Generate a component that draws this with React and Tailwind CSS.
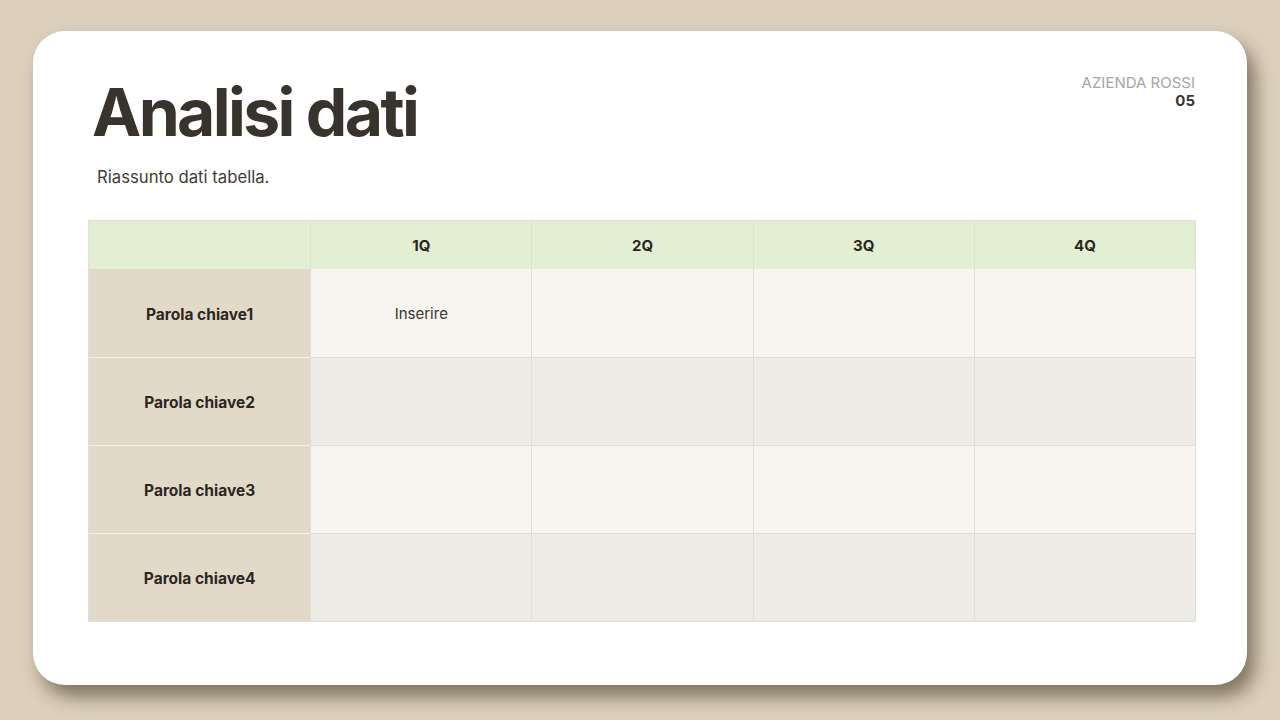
const quarters = ['1Q', '2Q', '3Q', '4Q'];
const rows = [
    { label: 'Parola chiave1', cells: ['Inserire', '', '', ''] },
    { label: 'Parola chiave2', cells: ['', '', '', ''] },
    { label: 'Parola chiave3', cells: ['', '', '', ''] },
    { label: 'Parola chiave4', cells: ['', '', '', ''] },
];

const App = () => {
    return (
        <div
            className="w-[1280px] h-[720px] bg-[#dcd0bc] pt-[31px] pl-[33px] overflow-hidden"
            style={{ fontFamily: 'Inter, "Noto Sans", sans-serif' }}
        >
            <div className="w-[1214px] h-[654px] bg-white rounded-[32px] shadow-[8px_12px_18px_rgba(70,58,35,0.6)] pt-[42px] px-[51px]">
                <div className="flex justify-between items-start">
                    <div>
                        <h1 className="mt-[6px] pl-[8px] text-[66px] leading-none font-bold tracking-[-0.04em] text-[#38332c]">
                            Analisi dati
                        </h1>
                        <p className="mt-[20px] pl-[13px] text-[16.7px] leading-6 text-[#3f3b36]">
                            Riassunto dati tabella.
                        </p>
                    </div>
                    <div className="text-right text-[15px] leading-[18px] pt-[1px] pr-[1px]">
                        <div className="text-[#a9a59f]">AZIENDA ROSSI</div>
                        <div className="font-bold text-[#3a352e]">05</div>
                    </div>
                </div>

                <div className="mt-[31px] ml-[4px] w-[1108px] border border-[#e2dfd8] grid grid-cols-5">
                    <div className="h-[48px] bg-[#e3efd3]" />
                    {quarters.map((q) => (
                        <div
                            key={q}
                            className="h-[48px] pt-[2px] bg-[#e3efd3] border-l border-[#d9e4cb] flex items-center justify-center text-[15px] font-bold text-[#2b2721]"
                        >
                            {q}
                        </div>
                    ))}
                    {rows.map((row, i) => (
                        <div key={row.label} className="contents">
                            <div
                                className={`h-[88px] pt-[3px] bg-[#e3d9c9] flex items-center justify-center text-[15.5px] font-bold text-[#2b2721] ${i > 0 ? 'border-t border-[#f7f2e6]' : ''}`}
                            >
                                {row.label}
                            </div>
                            {row.cells.map((c, j) => (
                                <div
                                    key={j}
                                    className={`h-[88px] pt-[3px] flex items-center justify-center text-[15px] text-[#3a352e] border-l border-[#e0ddd6] ${i > 0 ? 'border-t' : ''} ${i % 2 === 0 ? 'bg-[#f7f5f0]' : 'bg-[#ecebe5]'}`}
                                >
                                    {c}
                                </div>
                            ))}
                        </div>
                    ))}
                </div>
            </div>
        </div>
    );
};

export default App;
